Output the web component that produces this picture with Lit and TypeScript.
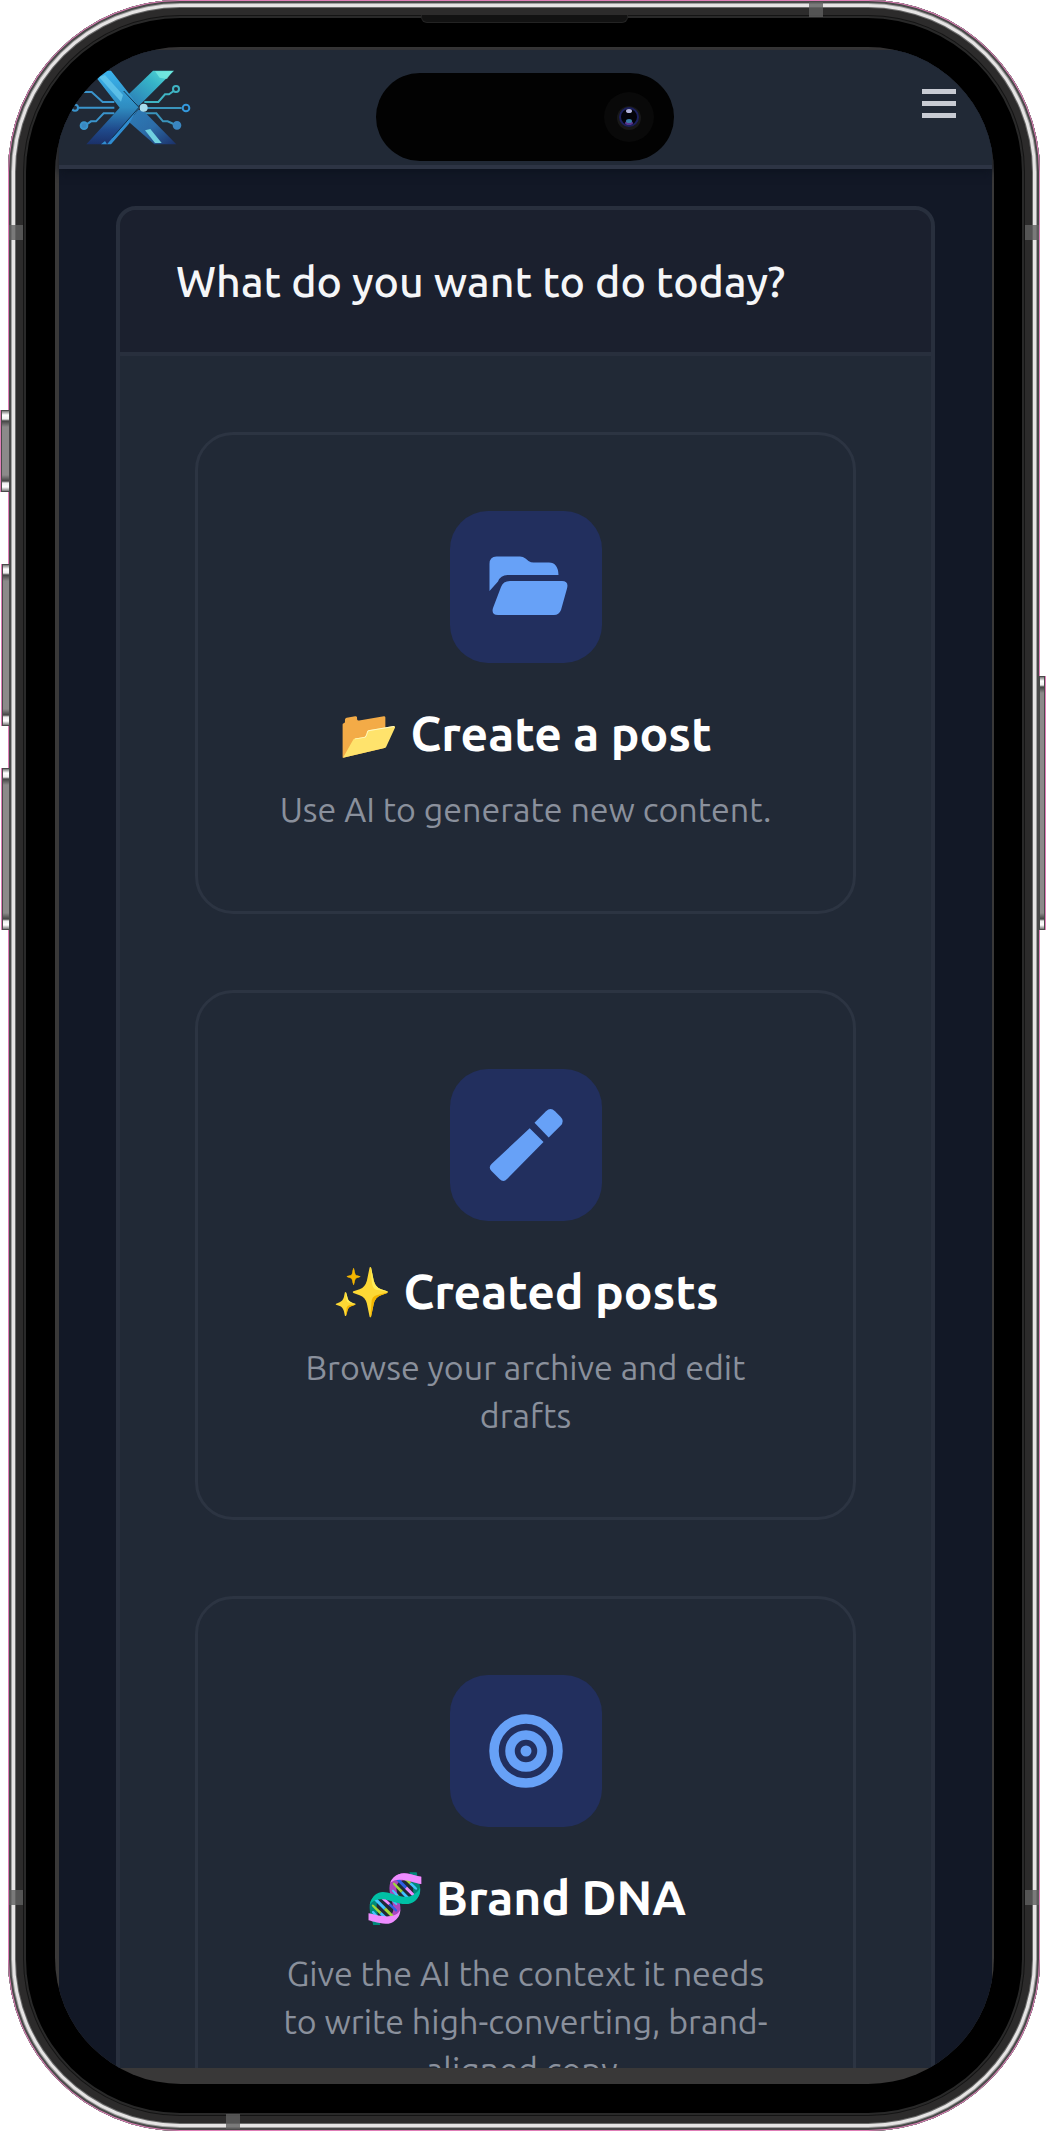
import { LitElement, html, css, svg } from "lit";
import { customElement, property } from "lit/decorators.js";

const icons = {
  folder: svg`
    <path d="M39.5 80V53q0-7.500 7-7.500h23.500q3 0 5.500 2l3 2.500q2.500 1.500 5 1.500H99q9 0 9.500 12.500H57.500q-7 0-9.500 6.500z"/>
    <path d="M60 70h52q7 0 5 7.500l-6 21.500q-2 5-7 5H48q-7 0-5-7l8-21q2-6 9-6z"/>`,
  pencil: svg`
    <path d="M84.500 53.700l11.500-11.500q4.500-4.500 9 0l5.500 5.500q4.500 4.500 0 9L98.700 68.500z"/>
    <path d="M79.700 59.200L93.500 73 57 110q-3.500 4-7.500 0l-8-8q-3.500-3.500 0-7z"/>`,
  target: svg`
    <circle cx="76" cy="76" r="32" fill="none" stroke="currentColor" stroke-width="9.500"/>
    <circle cx="76" cy="76" r="16" fill="none" stroke="currentColor" stroke-width="9.500"/>
    <circle cx="76" cy="76" r="5.500"/>`,
};

type IconName = keyof typeof icons;

interface Action {
  icon: IconName;
  emoji: string;
  title: string;
  text: string;
}

const actions: Action[] = [
  { icon: "folder", emoji: "📂", title: "Create a post", text: "Use AI to generate new content." },
  { icon: "pencil", emoji: "✨", title: "Created posts", text: "Browse your archive and edit drafts" },
  {
    icon: "target",
    emoji: "🧬",
    title: "Brand DNA",
    text: "Give the AI the context it needs to write high-converting, brand-aligned copy.",
  },
];

@customElement("action-card")
export class ActionCard extends LitElement {
  @property() icon: IconName = "folder";
  @property() emoji = "";
  @property() heading = "";
  @property() text = "";

  static styles = css`
    :host {
      display: block;
    }
    .card {
      display: flex;
      flex-direction: column;
      align-items: center;
      padding: 76px;
      border: 3px solid #2c3442;
      border-radius: 38px;
      color: #fff;
      text-align: center;
      text-decoration: none;
    }
    .tile {
      width: 152px;
      height: 152px;
      border-radius: 38px;
      background: #222f5e;
      color: #67a1f7;
    }
    .tile svg {
      display: block;
      fill: currentColor;
    }
    .title {
      margin: 38px 0 20px;
      font-size: 48px;
      line-height: 64px;
      font-weight: 600;
      white-space: nowrap;
    }
    .text {
      margin: 0 0 2px;
      color: #8a909c;
      font-size: 34px;
      line-height: 48px;
    }
  `;

  render() {
    return html`
      <a class="card" href="#">
        <span class="tile"><svg viewBox="0 0 152 152" aria-hidden="true">${icons[this.icon]}</svg></span>
        <h2 class="title">${this.emoji} ${this.heading}</h2>
        <p class="text">${this.text}</p>
      </a>
    `;
  }
}

@customElement("app-root")
export class AppRoot extends LitElement {
  static styles = css`
    :host {
      display: block;
      background: #fff;
      font-family: Ubuntu, "Noto Sans", "Noto Color Emoji", sans-serif;
    }
    .stage {
      box-sizing: border-box;
      height: 100vh;
      padding: 0 6px 0 8px;
    }
    .phone {
      position: relative;
      box-sizing: border-box;
      height: 100%;
      padding: 47px 46px 47px 47px;
      border-radius: 172px;
      background: #000;
      box-shadow:
        inset 0 0 0 1px #e07fb8,
        inset 0 0 0 3px #4a4a4a,
        inset 0 0 0 4px #a0a0a0,
        inset 0 0 0 7px #e6e4e4,
        inset 0 0 0 8px #6a6a6a,
        inset 0 0 0 15px #2c2b2b,
        inset 0 0 0 16px #141414,
        inset 0 0 0 18px #292929;
    }
    .glass {
      display: flex;
      box-sizing: border-box;
      height: 100%;
      padding: 3px 2px 16px 4px;
      border-radius: 126px;
      background: #393838;
      overflow: hidden;
    }
    .screen {
      display: flex;
      flex-direction: column;
      flex: 1;
      min-width: 0;
      background: #121826;
    }
    .bar {
      display: flex;
      align-items: center;
      justify-content: space-between;
      padding: 19px 36px 19px 12px;
      border-bottom: 4px solid #2d3444;
      background: #212936;
      box-shadow: 0 4px 8px #0e1420;
    }
    .logo {
      display: block;
      width: 120px;
      height: 77px;
    }
    .menu {
      display: flex;
      flex-direction: column;
      gap: 7px;
      padding: 0 0 8px;
      border: 0;
      background: none;
    }
    .line {
      width: 34px;
      height: 5px;
      background: #c8cbd3;
    }
    .content {
      flex: 1;
      min-height: 0;
      padding: 37px 57px;
      overflow-y: auto;
      scrollbar-width: none;
    }
    .panel {
      border: 4px solid #282f3d;
      border-radius: 20px;
      background: #212936;
      overflow: hidden;
    }
    .head {
      padding: 40px 56px;
      border-bottom: 4px solid #282f3d;
      background: #1b202e;
    }
    .question {
      margin: 0;
      color: #f5f6f8;
      font-size: 43px;
      line-height: 62px;
      font-weight: 500;
    }
    .list {
      display: grid;
      gap: 76px;
      padding: 76px 75px;
    }
    .island {
      position: absolute;
      top: 73px;
      left: 50%;
      width: 298px;
      height: 88px;
      margin-left: -148px;
      border-radius: 44px;
      background: #020202;
    }
    .camera {
      position: absolute;
      top: 19px;
      right: 20px;
      width: 50px;
      height: 50px;
    }
    .speaker {
      position: absolute;
      top: 15px;
      left: 50%;
      width: 205px;
      height: 7px;
      margin-left: -103px;
      border: solid #232323;
      border-width: 0 1px 1px;
      border-radius: 0 0 6px 6px;
      background: #121212;
    }
    .band {
      position: absolute;
      width: 14px;
      height: 15px;
      background: #5f5f5fcc;
    }
    .band.top {
      top: 2px;
      right: 217px;
    }
    .band.bottom {
      bottom: 2px;
      left: 218px;
    }
    .band.upper {
      top: 225px;
    }
    .band.lower {
      bottom: 226px;
    }
    .band.west {
      left: 1px;
    }
    .band.east {
      right: 1px;
    }
    .key {
      position: absolute;
      left: -6px;
      box-sizing: border-box;
      width: 8px;
      height: 162px;
      border: 1px solid #4a4a4a;
      background: linear-gradient(#777, #fff 4px, #eee 8px, #444 10px, #8c8a8a 16px, #8c8a8a calc(100% - 16px), #444 calc(100% - 10px), #eee calc(100% - 8px), #fff calc(100% - 4px), #777);
      box-shadow: -1px 0 #e07fb8;
    }
    .key.mute {
      top: 410px;
      left: -7px;
      width: 9px;
      height: 82px;
    }
    .key.up {
      top: 564px;
    }
    .key.down {
      top: 768px;
    }
    .key.power {
      top: 676px;
      right: -5px;
      left: auto;
      width: 6px;
      height: 254px;
      box-shadow: 1px 0 #e07fb8;
    }
  `;

  private logo() {
    return html`
      <svg class="logo" viewBox="210 208 360 231" role="img" aria-label="X logo">
        <defs>
          <linearGradient id="rise" x1="0" y1="1" x2="1" y2="0">
            <stop offset="0" stop-color="#2b78b4" />
            <stop offset=".6" stop-color="#36b4c8" />
            <stop offset="1" stop-color="#5fe0d8" />
          </linearGradient>
          <linearGradient id="fold" x1="0" y1="0" x2="0" y2="1">
            <stop offset="0" stop-color="#3bb4ee" />
            <stop offset=".5" stop-color="#2f8cc0" />
            <stop offset=".8" stop-color="#1f4a8c" />
            <stop offset="1" stop-color="#1b3068" />
          </linearGradient>
          <linearGradient id="fall" x1="0" y1="0" x2="1" y2="1">
            <stop offset="0" stop-color="#2d7db8" />
            <stop offset=".5" stop-color="#2c6ca8" />
            <stop offset="1" stop-color="#1b3068" />
          </linearGradient>
        </defs>
        <g fill="none" stroke="#3a94cc" stroke-width="6">
          <path d="M340 324H228M340 307H305L272 277H246M340 341H308L285 365H270L256 375" />
          <circle cx="222" cy="324" r="9" />
          <circle cx="238" cy="270" r="9" />
          <circle cx="249" cy="378" r="10" fill="#3a86c0" />
        </g>
        <g fill="none" stroke="#3fb4c4" stroke-width="6">
          <path d="M430 307H472L492 284H504L518 274" />
          <circle cx="525" cy="268" r="9" />
          <path stroke="#3a94bc" d="M430 325H542M430 341H466L486 365H500L518 373" />
          <circle cx="555" cy="325" r="10" stroke="#3398dc" />
          <circle cx="528" cy="377" r="10" stroke="#3a86c0" fill="#3a86c0" />
        </g>
        <path fill="url(#rise)" d="M456 213H519L426 306L413 318L383 284Z" />
        <path fill="url(#fall)" d="M383 366L412 330L428 334L526 434H460Z" />
        <path fill="#6fd0e0" d="M432 392L448 388L482 430H462Z" />
        <path fill="url(#fold)" d="M270 213H330L413 318V328L322 434H256L356 324Z" />
        <path fill="#6ccdf0" opacity=".7" d="M294 232L312 226L366 286L360 306Z" />
        <path fill="#2f8cd0" d="M318 434L408 330L384 372L330 434H300L312 424Z" />
        <path fill="none" stroke="#12334e" stroke-width="3" d="M368 274L414 323L334 414" />
        <path fill="#7ef0e4" d="M462 215H514L498 238L476 234Z" opacity=".7" />
        <circle cx="428" cy="324" r="12" fill="#a8dcec" />
      </svg>
    `;
  }

  render() {
    return html`
      <div class="stage">
        <div class="phone">
          <div class="glass">
            <div class="screen">
              <header class="bar">
                ${this.logo()}
                <button class="menu" aria-label="Open menu">
                  <span class="line"></span><span class="line"></span><span class="line"></span>
                </button>
              </header>
              <main class="content">
                <section class="panel">
                  <div class="head"><h1 class="question">What do you want to do today?</h1></div>
                  <div class="list">
                    ${actions.map(
                      (a) => html`<action-card
                        .icon=${a.icon}
                        .emoji=${a.emoji}
                        .heading=${a.title}
                        .text=${a.text}
                      ></action-card>`
                    )}
                  </div>
                </section>
              </main>
            </div>
          </div>
          <div class="speaker"></div>
          <div class="island">
            <svg class="camera" viewBox="0 0 50 50" aria-hidden="true">
              <circle cx="25" cy="25" r="25" fill="#090909" />
              <circle cx="25" cy="26" r="12" fill="#181818" />
              <circle cx="25" cy="25" r="9" fill="#03030a" stroke="#1b1f5c" stroke-width="2" />
              <ellipse cx="25" cy="19" rx="3" ry="2" fill="#b4b4dc" />
              <ellipse cx="25" cy="31" rx="4" ry="2" fill="#58348c" />
              <ellipse cx="25" cy="29" rx="3" ry="2" fill="#3a7ca8" />
            </svg>
          </div>
          <i class="band top"></i>
          <i class="band bottom"></i>
          <i class="band upper west"></i>
          <i class="band upper east"></i>
          <i class="band lower west"></i>
          <i class="band lower east"></i>
          <i class="key mute"></i>
          <i class="key up"></i>
          <i class="key down"></i>
          <i class="key power"></i>
        </div>
      </div>
    `;
  }
}
